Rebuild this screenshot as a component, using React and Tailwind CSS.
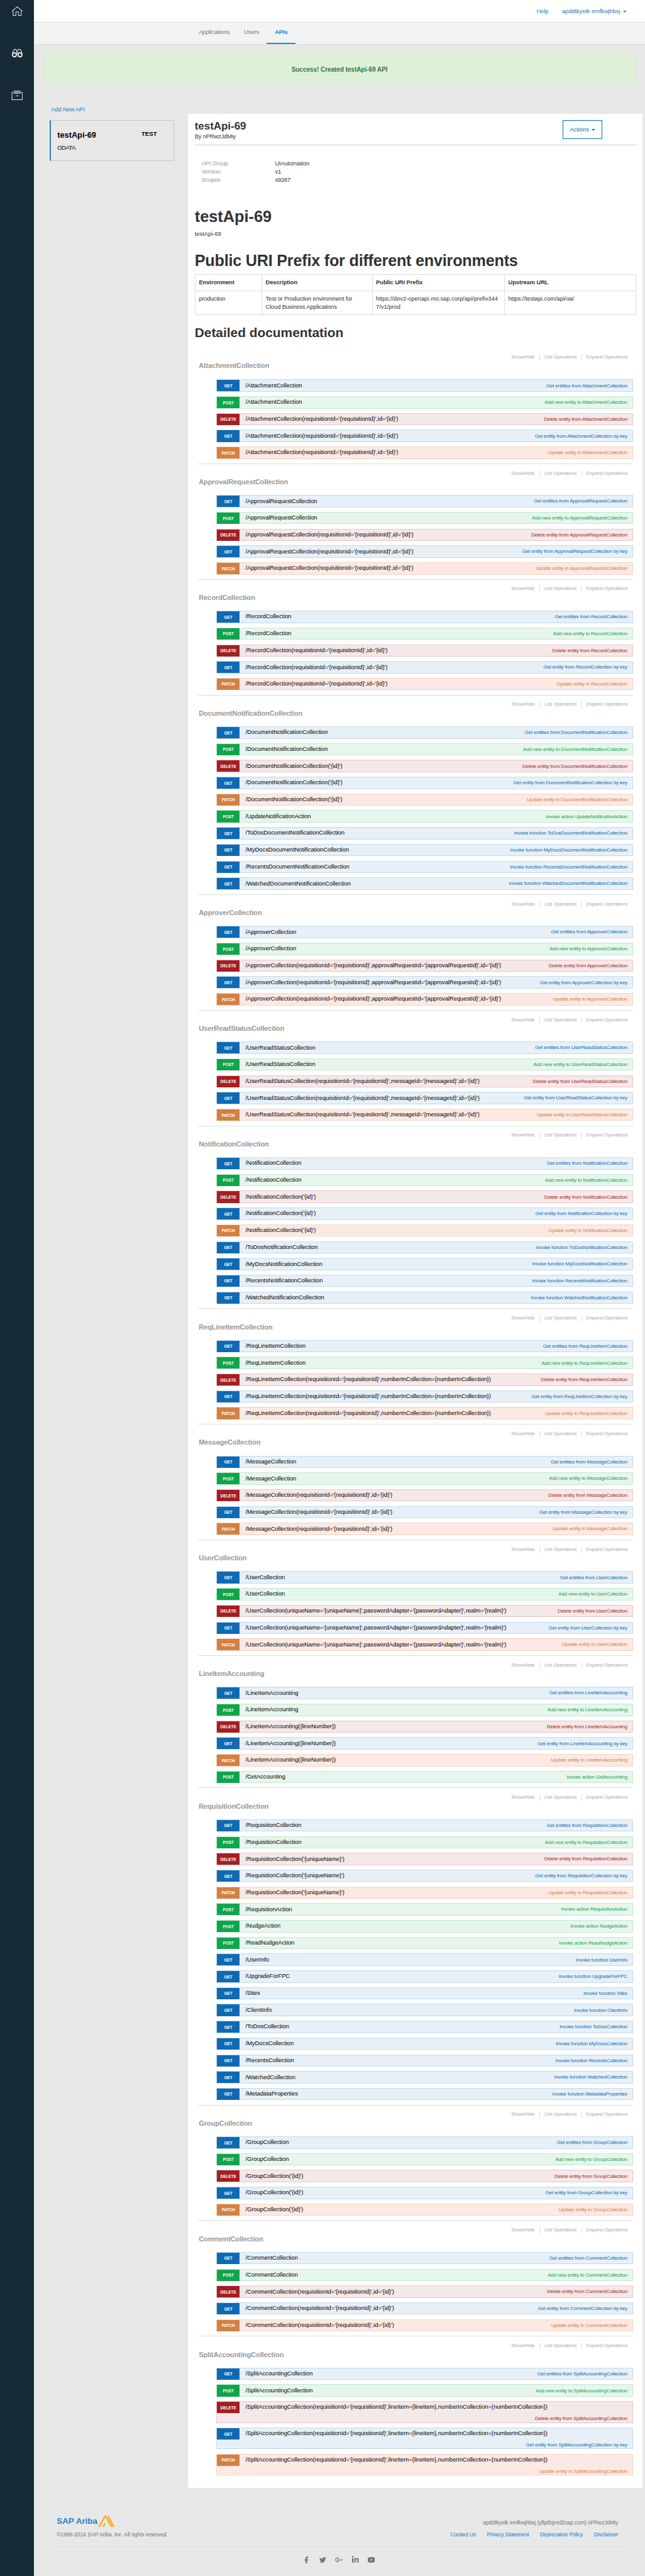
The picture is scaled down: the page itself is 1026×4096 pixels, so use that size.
import React from "react";
import { FaFacebookF, FaTwitter, FaGooglePlusG, FaLinkedinIn } from "react-icons/fa";

const METHOD_STYLES = {
  GET: { row: "bg-[#e7f0f7] border-[#c3d9ec]", badge: "bg-[#0f6ab4]", text: "text-[#0f6ab4]" },
  POST: { row: "bg-[#e7f6ec] border-[#c3e8d1]", badge: "bg-[#10a54a]", text: "text-[#10a54a]" },
  DELETE: { row: "bg-[#f5e8e8] border-[#e8c6c7]", badge: "bg-[#a41e22]", text: "text-[#a41e22]" },
  PATCH: { row: "bg-[#fce9e3] border-[#f5d5c3]", badge: "bg-[#d38042]", text: "text-[#d38042]" },
};

// The five operations that every entity collection exposes.
const crud = (name, key) => [
  ["GET", `/${name}`, `Get entities from ${name}`],
  ["POST", `/${name}`, `Add new entity to ${name}`],
  ["DELETE", `/${name}(${key})`, `Delete entity from ${name}`],
  ["GET", `/${name}(${key})`, `Get entity from ${name} by key`],
  ["PATCH", `/${name}(${key})`, `Update entity in ${name}`],
];
const fn = (name) => ["GET", `/${name}`, `Invoke function ${name}`];
const action = (name) => ["POST", `/${name}`, `Invoke action ${name}`];

const REQ_AND_ID = "requisitionId='{requisitionId}',id='{id}'";

const SECTIONS = [
  { name: "AttachmentCollection", key: REQ_AND_ID },
  { name: "ApprovalRequestCollection", key: REQ_AND_ID },
  { name: "RecordCollection", key: REQ_AND_ID },
  {
    name: "DocumentNotificationCollection",
    key: "'{id}'",
    extra: [
      action("UpdateNotificationAction"),
      fn("ToDosDocumentNotificationCollection"),
      fn("MyDocsDocumentNotificationCollection"),
      fn("RecentsDocumentNotificationCollection"),
      fn("WatchedDocumentNotificationCollection"),
    ],
  },
  {
    name: "ApproverCollection",
    key: "requisitionId='{requisitionId}',approvalRequestId='{approvalRequestId}',id='{id}'",
  },
  { name: "UserReadStatusCollection", key: "requisitionId='{requisitionId}',messageId='{messageId}',id='{id}'" },
  {
    name: "NotificationCollection",
    key: "'{id}'",
    extra: [
      fn("ToDosNotificationCollection"),
      fn("MyDocsNotificationCollection"),
      fn("RecentsNotificationCollection"),
      fn("WatchedNotificationCollection"),
    ],
  },
  { name: "ReqLineItemCollection", key: "requisitionId='{requisitionId}',numberInCollection={numberInCollection}" },
  { name: "MessageCollection", key: REQ_AND_ID },
  {
    name: "UserCollection",
    key: "uniqueName='{uniqueName}',passwordAdapter='{passwordAdapter}',realm='{realm}'",
  },
  { name: "LineItemAccounting", key: "{lineNumber}", extra: [action("GetAccounting")] },
  {
    name: "RequisitionCollection",
    key: "'{uniqueName}'",
    extra: [
      action("RequisitionAction"),
      action("NudgeAction"),
      action("ReadNudgeAction"),
      fn("UserInfo"),
      fn("UpgradeForFPC"),
      fn("Sites"),
      fn("ClientInfo"),
      fn("ToDosCollection"),
      fn("MyDocsCollection"),
      fn("RecentsCollection"),
      fn("WatchedCollection"),
      fn("MetadataProperties"),
    ],
  },
  { name: "GroupCollection", key: "'{id}'" },
  { name: "CommentCollection", key: REQ_AND_ID },
  {
    name: "SplitAccountingCollection",
    key: "requisitionId='{requisitionId}',lineItem={lineItem},numberInCollection={numberInCollection}",
    tall: true,
  },
];

function Operation({ op, tall }) {
  const [method, path, summary] = op;
  const s = METHOD_STYLES[method];
  const note = (
    <span className={`pr-[10.6px] text-[11px] tracking-[-0.2px] ${s.text}`}>{summary}</span>
  );
  return (
    <div className={`flex flex-col border ${s.row} ${tall ? "mb-[10.2px] h-[47.9px]" : "mb-[10px] h-[27.1px]"}`}>
      <div className="flex h-[25.1px] shrink-0 items-center">
        <span
          className={`flex h-full w-[50px] items-center justify-center pt-[1px] text-[9px] font-bold tracking-[-0.1px] text-white ${s.badge}`}
        >
          {method}
        </span>
        <span className="ml-[13px] pb-[2px] text-[13px] tracking-[-0.067px] text-black">{path}</span>
        {!tall && <span className="ml-auto flex">{note}</span>}
      </div>
      {tall && <div className="flex h-[25px] shrink-0 items-center justify-end">{note}</div>}
    </div>
  );
}

function Section({ section, first }) {
  const { name, key, extra = [], tall } = section;
  return (
    <section>
      <div className={`flex h-[70.06px] items-start justify-between ${first ? "" : "border-t border-[#dddddd]"}`}>
        <h3 className="mt-[29.5px] pl-[1px] text-[15.5px] leading-[20px] font-bold tracking-[-0.24px] text-[#999999]">
          {name}
        </h3>
        <div className="mt-[13.5px] mr-[1.4px] flex text-[11px] leading-[15px] tracking-[-0.17px] text-[#aaaaaa]">
          <span className="pr-[10.4px]">Show/Hide</span>
          <span className="border-l border-[#dddddd] px-[10px]">List Operations</span>
          <span className="border-l border-[#dddddd] px-[10px]">Expand Operations</span>
        </div>
      </div>
      <div className="ml-[39.8px]">
        {[...crud(name, key), ...extra].map((op, i) => (
          <Operation key={i} op={op} tall={tall && i >= 2} />
        ))}
      </div>
    </section>
  );
}

function Caret({ className }) {
  return (
    <svg viewBox="0 0 8 4" className={`h-[4px] w-[8px] ${className}`} fill="currentColor">
      <path d="M0 0h8L4 4z" />
    </svg>
  );
}

function Sidebar() {
  const icon = "h-[24px] w-[26px]";
  return (
    <aside className="flex w-[75px] shrink-0 flex-col items-center bg-[#172b36] pt-[13px]">
      <svg viewBox="0 0 26 24" className={icon} fill="none" stroke="#e8e8e8" strokeWidth="1.4">
        <path d="M1.5 12 13 2.500 24.500 12M4 10.500V21.500H10.200V13.500H15.800V21.500H22V10.500" />
      </svg>
      <svg viewBox="0 0 26 24" className={`mt-[69px] ${icon}`} fill="none" stroke="#e8e8e8">
        <circle cx="6.800" cy="15.500" r="4.300" strokeWidth="2.600" />
        <circle cx="19.200" cy="15.500" r="4.300" strokeWidth="2.600" />
        <path d="M2 14C3.500 7 5 3.300 8.500 3.300 11.500 3.300 12 6 12 9v6M24 14C22.500 7 21 3.300 17.500 3.300 14.500 3.300 14 6 14 9v6" strokeWidth="1.400" />
      </svg>
      <svg viewBox="0 0 26 24" className={`mt-[68.500px] ${icon}`} fill="none" stroke="#e8e8e8" strokeWidth="1.400">
        <path d="M5.500 5.500H1.500V21.500H24.500V5.500H20.500M5.500 2.500H20.500M5.500 5H20.500M5.500 7.500H20.500M10 13H16" />
      </svg>
    </aside>
  );
}

function Footer() {
  return (
    <footer className="mt-[60px] mr-[51px] ml-[50.4px] text-[12px] text-[#757575]">
      <div className="flex h-[28px] items-center justify-between">
        <div className="flex items-center">
          <span className="text-[18.6px] leading-[26px] font-bold text-[#1b82d2]">SAP Ariba</span>
          <svg viewBox="0 0 110 75" className="ml-[2px] h-[25px] w-[36.700px]" fill="#f4b02c">
            <path d="M0 75 42 1h12l42 74H84L48 12 12 75zM60 1h12l38 74H98zM28 75 44 45l6 10L39 75z" />
          </svg>
        </div>
        <span className="mt-[6px] mr-[8.500px] tracking-[-0.2px]">apddtkyetk emfkwjhbsj (yftptfsjns@sap.com) nPRwzJdMiy</span>
      </div>
      <div className="mt-[7.500px] flex h-[18px] items-center justify-between">
        <span className="tracking-[-0.14px]">©1996-2016 SAP Ariba, Inc. All rights reserved</span>
        <span className="mr-[8.500px] flex gap-[24.500px] tracking-[-0.27px] text-[#0a84e3]">
          <a>Contact Us</a>
          <a>Privacy Statement</a>
          <a>Deprecation Policy</a>
          <a>Disclaimer</a>
        </span>
      </div>
      <div className="mt-[16.500px] border-t border-[#d8d8d8]" />
      <div className="mt-[19px] ml-[545.500px] flex h-[18px] items-center">
        <FaFacebookF className="h-[16px] w-[12px]" />
        <FaTwitter className="ml-[22.500px] h-[15px] w-[15px]" />
        <FaGooglePlusG className="ml-[20px] h-[17px] w-[17px]" />
        <FaLinkedinIn className="ml-[19px] h-[17px] w-[17px]" />
        <svg viewBox="0 0 16 12" className="ml-[19px] h-[12px] w-[16px]" fill="currentColor">
          <path fillRule="evenodd" d="M3 .3Q8-.3 13 .3 15.500.5 15.800 3 16.200 6 15.800 9 15.500 11.500 13 11.700 8 12.300 3 11.700.5 11.500.2 9-.2 6 .2 3 .5.5 3 .3zM6.300 3.500v5l4.200-2.500z" />
        </svg>
      </div>
    </footer>
  );
}

export default function App() {
  return (
    <div className="flex h-[5688.800px] w-[1425px] overflow-hidden bg-[#e8e8e8] font-['Liberation_Sans',Arial,sans-serif] text-[13px] text-[#333333] [zoom:0.72]">
      <Sidebar />
      <div className="flex min-w-0 flex-1 flex-col">
        <header className="flex h-[50px] shrink-0 items-center justify-end border-b border-[#dddddd] bg-white pt-[2px] pr-[41px] tracking-[-0.11px] text-[#337ab7]">
          <a>Help</a>
          <a className="ml-[30px] flex items-center">
            apddtkyetk emfkwjhbsj
            <Caret className="ml-[6px]" />
          </a>
        </header>
        <nav className="flex h-[49px] shrink-0 border-b border-[#dddddd] bg-[#f3f3f3] pl-[363.800px] leading-[44px] tracking-[-0.110px] text-[#777777]">
          <a>Applications</a>
          <a className="ml-[31.500px]">Users</a>
          <a className="ml-[17px] h-[47px] w-[64px] border-b-[3px] border-[#0a8ce8] text-center font-bold tracking-[-0.100px] text-[#0a84e3]">
            APIs
          </a>
        </nav>
        <div className="mx-[20px] mt-[21px] flex h-[66.700px] shrink-0 items-center justify-center border border-[#d6e9c6] bg-[#dff0d8] pt-[1px] text-[14px] font-bold tracking-[-0.120px] text-[#3c763d]">
          Success! Created testApi-69 API
        </div>

        <div className="flex shrink-0 items-start">
          <div className="mt-[46.300px] ml-[35px] w-[275px]">
            <a className="block pl-[3px] leading-[19px] tracking-[-0.200px] text-[#337ab7]">Add New API</a>
            <div className="mt-[14px] flex h-[90px] justify-between border border-l-[3px] border-[#c8c8c8] border-l-[#337ab7] pr-[37px] pl-[14px] text-black">
              <div className="pt-[19px]">
                <div className="text-[17.700px] leading-[24px] font-bold">testApi-69</div>
                <div className="mt-[6px] leading-[22px] tracking-[-0.600px]">ODATA</div>
              </div>
              <div className="pt-[18px] text-[13.500px] leading-[22px] font-bold tracking-[-0.100px]">TEST</div>
            </div>
          </div>

          <main className="mt-[64.300px] ml-[30.200px] flex h-[5243px] w-[1004.800px] flex-col bg-white pr-[15px] pl-[15px]">
            <div className="flex h-[70.500px] shrink-0 items-start justify-between border-b border-[#cccccc]">
              <div className="pt-[14.300px]">
                <h2 className="text-[23.500px] leading-[28px] font-bold">testApi-69</h2>
                <div className="leading-[19px] tracking-[-0.260px]">By nPRwzJdMiy</div>
              </div>
              <button className="mt-[15px] mr-[74px] flex h-[41px] w-[88px] items-center justify-center border border-[#0070c8] text-[13px] text-[#0070c8]">
                Actions
                <Caret className="ml-[6px]" />
              </button>
            </div>
            <dl className="mt-[30.700px] ml-[15px] grid w-[400px] grid-cols-[162.500px_1fr] leading-[18.500px] tracking-[-0.260px]">
              <dt className="text-[#999999]">API Group</dt>
              <dd>UIAutomation</dd>
              <dt className="text-[#999999]">Version</dt>
              <dd>v1</dd>
              <dt className="text-[#999999]">Scopes</dt>
              <dd>s9267</dd>
            </dl>
            <h1 className="mt-[50.200px] text-[35.200px] leading-[40px] font-bold">testApi-69</h1>
            <p className="mt-[10px] leading-[19px]">testApi-69</p>
            <h1 className="mt-[29.300px] text-[35px] leading-[40px] font-bold tracking-[-0.300px]">
              Public URI Prefix for different environments
            </h1>
            <div className="mt-[9px] h-[90.200px] shrink-0 border border-[#dddddd] leading-[19px]">
              <div className="grid h-[36.300px] grid-cols-[146.500px_243.800px_292.200px_1fr] border-b-2 border-[#dddddd] font-bold tracking-[-0.120px] [&>div]:border-[#dddddd] [&>div]:pt-[9px] [&>div]:pl-[8px] [&>div+div]:border-l [&>div+div]:pl-[7.500px]">
                <div>Environment</div>
                <div>Description</div>
                <div>Public URI Prefix</div>
                <div>Upstream URL</div>
              </div>
              <div className="grid h-[52px] grid-cols-[146.500px_243.800px_292.200px_1fr] tracking-[-0.220px] [&>div]:border-[#dddddd] [&>div]:pt-[8px] [&>div]:pl-[8px] [&>div+div]:border-l [&>div+div]:pl-[7.500px]">
                <div>production</div>
                <div>
                  Test or Production environment for
                  <br />
                  Cloud Business Applications
                </div>
                <div className="tracking-[-0.040px]">
                  https://dev2-openapi.mo.sap.corp/api/prefix344
                  <br />
                  7/v1/prod
                </div>
                <div className="tracking-[-0.100px]">https://testapi.com/api/oa/</div>
              </div>
            </div>
            <h2 className="mt-[22.500px] text-[29px] leading-[32px] font-bold">Detailed documentation</h2>
            <div className="mt-[18.300px] mr-[7px] ml-[8px]">
              {SECTIONS.map((s, i) => (
                <Section key={s.name} section={s} first={i === 0} />
              ))}
            </div>
          </main>
        </div>
        <Footer />
      </div>
    </div>
  );
}
